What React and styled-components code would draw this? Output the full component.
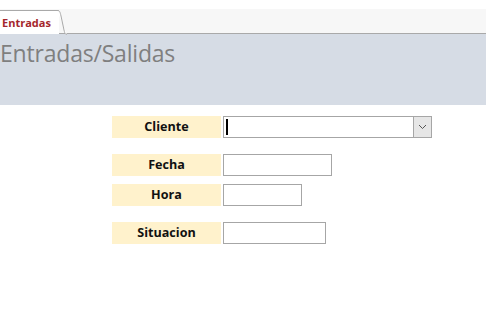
import React from 'react'
import styled, { createGlobalStyle } from 'styled-components'

const GlobalStyle = createGlobalStyle`
  html, body {
    margin: 0;
    padding: 0;
    background: #ffffff;
  }
  body {
    font-family: 'Open Sans', 'Noto Sans', sans-serif;
  }
`

const TabStrip = styled.div`
  height: 24px;
  margin-top: 9px;
  background: #f7f7f7;
  border-bottom: 1px solid #a9a9a9;
  display: flex;
  align-items: flex-end;
  position: relative;
`

const Tab = styled.div`
  position: relative;
  height: 24px;
  margin-bottom: -1px;
  padding: 0 8px 0 2px;
  display: flex;
  align-items: center;
  background: #ffffff;
  color: #a4262c;
  font-weight: 700;
  font-size: 11px;
  box-sizing: border-box;
  border-top: 1px solid #a9a9a9;
  svg {
    position: absolute;
    right: -8px;
    top: -1px;
  }
`

const Header = styled.header`
  height: 71px;
  background: #d6dce5;
  box-sizing: border-box;
  padding-top: 3px;
`

const Title = styled.h1`
  margin: 0;
  font-weight: 400;
  font-size: 23px;
  color: #7f7f7f;
  letter-spacing: -0.2px;
`

const Form = styled.div`
  display: flex;
  flex-direction: column;
  padding: 11px 0 0 112px;
`

const Row = styled.div`
  display: flex;
  gap: 2px;
  margin-top: ${p => p.$gap || 0}px;
`

const Label = styled.div`
  width: 109px;
  height: 22px;
  padding-bottom: 2px;
  box-sizing: border-box;
  background: #fff2cc;
  display: flex;
  align-items: center;
  justify-content: center;
  font-weight: 700;
  font-size: 12.6px;
  color: #111111;
`

const Field = styled.div`
  width: ${p => p.$w}px;
  height: 22px;
  box-sizing: border-box;
  border: 1px solid #a6a6a6;
  background: #ffffff;
  display: flex;
  position: relative;
`

const Caret = styled.span`
  width: 2px;
  height: 16px;
  margin: 2px 0 0 2px;
  background: #000000;
`

const DropButton = styled.div`
  margin-left: auto;
  width: 17px;
  height: 20px;
  background: #e6e6e6;
  border-left: 1px solid #a6a6a6;
  display: flex;
  align-items: center;
  justify-content: center;
`

export default function App() {
  return (
    <>
      <GlobalStyle />
      <TabStrip>
        <Tab>
          Entradas
          <svg width="10" height="25" viewBox="0 0 10 25">
            <path d="M0 0.5 C3 0.5 3 2 4 6 L7 20 C8 24 8 24 10 24.5" fill="#ffffff" stroke="#a9a9a9" strokeWidth="1" />
          </svg>
        </Tab>
      </TabStrip>
      <Header>
        <Title>Entradas/Salidas</Title>
      </Header>
      <Form>
        <Row>
          <Label>Cliente</Label>
          <Field $w={209}>
            <Caret />
            <DropButton>
              <svg width="9" height="6" viewBox="0 0 9 6">
                <path d="M1 1 L4.5 4.5 L8 1" fill="none" stroke="#555" strokeWidth="1" />
              </svg>
            </DropButton>
          </Field>
        </Row>
        <Row $gap={16}>
          <Label>Fecha</Label>
          <Field $w={109} />
        </Row>
        <Row $gap={8}>
          <Label>Hora</Label>
          <Field $w={79} />
        </Row>
        <Row $gap={16}>
          <Label>Situacion</Label>
          <Field $w={103} />
        </Row>
      </Form>
    </>
  )
}
